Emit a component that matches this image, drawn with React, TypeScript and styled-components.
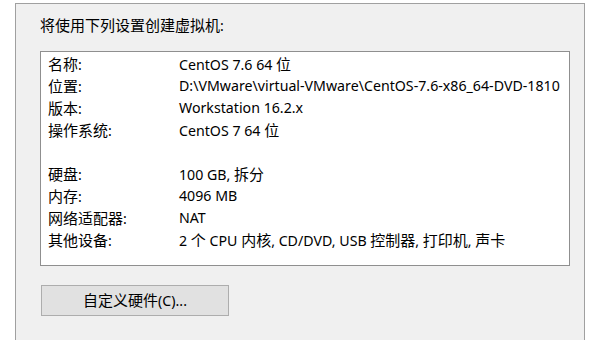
import React from "react";
import styled, { createGlobalStyle } from "styled-components";

const GlobalStyle = createGlobalStyle`
  html, body {
    margin: 0;
    padding: 0;
    background: #ffffff;
    overflow: hidden;
  }
  body {
    font-family: "Noto Sans", "Noto Sans CJK SC", sans-serif;
    color: #000000;
  }
`;

type Row = { label: string; value: string } | null;

const rows: Row[] = [
  { label: "名称:", value: "CentOS 7.6 64 位" },
  { label: "位置:", value: "D:\\VMware\\virtual-VMware\\CentOS-7.6-x86_64-DVD-1810" },
  { label: "版本:", value: "Workstation 16.2.x" },
  { label: "操作系统:", value: "CentOS 7 64 位" },
  null,
  { label: "硬盘:", value: "100 GB, 拆分" },
  { label: "内存:", value: "4096 MB" },
  { label: "网络适配器:", value: "NAT" },
  { label: "其他设备:", value: "2 个 CPU 内核, CD/DVD, USB 控制器, 打印机, 声卡" },
];

// Chinese glyphs in the dialog font are a bit larger than the latin ones
const Mixed: React.FC<{ text: string }> = ({ text }) => (
  <>
    {text.split(/([\u3400-\u9fff]+)/).map((part, i) =>
      /[\u3400-\u9fff]/.test(part) ? <Han key={i}>{part}</Han> : part
    )}
  </>
);

const App: React.FC = () => {
  return (
    <>
      <GlobalStyle />
      <Panel>
        <Heading>
          <Mixed text="将使用下列设置创建虚拟机:" />
        </Heading>
        <SummaryBox>
          {rows.map((row, i) =>
            row ? (
              <React.Fragment key={i}>
                <Label>
                  <Mixed text={row.label} />
                </Label>
                <Value>
                  <Mixed text={row.value} />
                </Value>
              </React.Fragment>
            ) : (
              <Spacer key={i} />
            )
          )}
        </SummaryBox>
        <Button>
          <Mixed text="自定义硬件(C)..." />
        </Button>
      </Panel>
    </>
  );
};

export default App;

const Han = styled.span`
  font-size: 15px;
`;

const Panel = styled.div`
  margin: 3px 0 0 15px;
  width: 570px;
  height: 337px;
  box-sizing: border-box;
  background: #f0f0f0;
  border: 1px solid #a0a0a0;
  border-bottom: none;
  padding: 10px 14px 0 24px;
  display: flex;
  flex-direction: column;
  align-items: flex-start;
`;

const Heading = styled.div`
  font-size: 14.2px;
  line-height: 22px;
  height: 22px;
`;

const SummaryBox = styled.div`
  margin-top: 15px;
  align-self: stretch;
  background: #ffffff;
  border: 1px solid #8f8f8f;
  padding: 1px 0 14px 7px;
  display: grid;
  grid-template-columns: 131px 1fr;
  grid-auto-rows: 22px;
  font-size: 14.2px;
  line-height: 22px;
`;

const Label = styled.div`
  white-space: nowrap;
`;

const Value = styled.div`
  white-space: nowrap;
`;

const Spacer = styled.div`
  grid-column: 1 / -1;
`;

const Button = styled.button`
  margin-top: 19px;
  margin-left: 1px;
  width: 188px;
  height: 31px;
  background: #e1e1e1;
  border: 1px solid #adadad;
  font-family: "Noto Sans", "Noto Sans CJK SC", sans-serif;
  font-size: 14.2px;
  line-height: 22px;
  color: #000000;
  padding: 0;
`;
